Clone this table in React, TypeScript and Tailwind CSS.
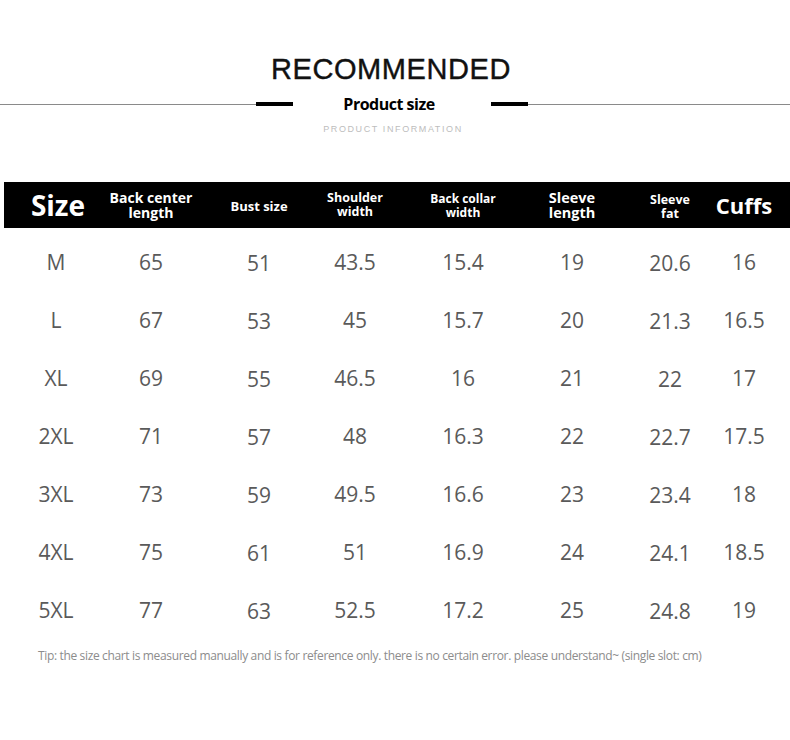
const rows = [
  ["M", "65", "51", "43.5", "15.4", "19", "20.6", "16"],
  ["L", "67", "53", "45", "15.7", "20", "21.3", "16.5"],
  ["XL", "69", "55", "46.5", "16", "21", "22", "17"],
  ["2XL", "71", "57", "48", "16.3", "22", "22.7", "17.5"],
  ["3XL", "73", "59", "49.5", "16.6", "23", "23.4", "18"],
  ["4XL", "75", "61", "51", "16.9", "24", "24.1", "18.5"],
  ["5XL", "77", "63", "52.5", "17.2", "25", "24.8", "19"],
];

// per-column nudges so each column centre lands where the chart has it
const colPad = [
  "pl-[7px]",
  "pr-[8px]",
  "pl-[6px]",
  "pr-[6px]",
  "",
  "pl-[6px]",
  "pl-[12px]",
  "pr-[9px]",
];

const dataNudge = ["pr-[4px]", "", "pt-[3px]", "", "pt-[1px]", "", "pt-[2px]", ""];

const grid = "grid grid-cols-[101px_100px_102px_102px_108px_104px_86px_1fr]";

export default function App() {
  return (
    <div className="w-[790px] h-[740px] bg-white overflow-hidden font-['Open_Sans',sans-serif]">
      <div className="pt-[55px] flex justify-center">
        <h1 className="font-['Liberation_Sans',Arial,sans-serif] text-[29px] leading-[29px] tracking-[0.6px] text-[#111] pr-[8px] [-webkit-text-stroke:0.4px_#111]">
          RECOMMENDED
        </h1>
      </div>

      <div className="mt-[10px] h-[20px] flex items-center">
        <div className="w-[256px] h-px bg-[#8a8a8a]" />
        <div className="w-[37px] h-[4px] bg-black" />
        <div className="w-[198px] text-center font-bold text-[16px] leading-[20px] text-black tracking-[-0.5px] pr-[6px]">
          Product size
        </div>
        <div className="w-[37px] h-[4px] bg-black" />
        <div className="flex-1 h-px bg-[#8a8a8a]" />
      </div>

      <p className="mt-[9px] text-center font-['Liberation_Sans',Arial,sans-serif] text-[9px] leading-[12px] tracking-[1.6px] text-[#bdbdbd] pr-[4px]">
        PRODUCT INFORMATION
      </p>

      <div className={`${grid} mt-[47px] ml-[4px] h-[46px] bg-black text-white font-bold items-center`}>
        <div className={`flex justify-center ${colPad[0]} text-[28px] leading-none`}>Size</div>
        <div className={`flex justify-center ${colPad[1]} text-center text-[14px] leading-[15px]`}>
          Back center<br />length
        </div>
        <div className={`flex justify-center ${colPad[2]} text-[13px] leading-[15px] pt-[2px]`}>Bust size</div>
        <div className={`flex justify-center ${colPad[3]} text-center text-[12.5px] leading-[14px]`}>
          Shoulder<br />width
        </div>
        <div className={`flex justify-center ${colPad[4]} text-center text-[12px] leading-[14px] pt-[2px] whitespace-nowrap`}>
          Back collar<br />width
        </div>
        <div className={`flex justify-center ${colPad[5]} text-center text-[14.5px] leading-[15px]`}>
          Sleeve<br />length
        </div>
        <div className={`flex justify-center ${colPad[6]} text-center text-[12.5px] leading-[14px] pt-[4px]`}>
          Sleeve<br />fat
        </div>
        <div className={`flex justify-center ${colPad[7]} text-[22px] leading-none`}>Cuffs</div>
      </div>

      <div className="mt-[5px] ml-[4px]">
        {rows.map((row) => (
          <div key={row[0]} className={`${grid} h-[58px] items-center`}>
            {row.map((cell, i) => (
              <div
                key={i}
                className={`flex justify-center ${colPad[i]} ${dataNudge[i]} text-[21px] leading-none text-[#5a5a5a]`}
              >
                {cell}
              </div>
            ))}
          </div>
        ))}
      </div>

      <p className="mt-[10px] pl-[38px] text-[12px] leading-[14px] text-[#8c8c8c] tracking-[-0.35px] whitespace-nowrap">
        Tip: the size chart is measured manually and is for reference only. there is no certain error. please understand~ (single slot: cm)
      </p>
    </div>
  );
}
